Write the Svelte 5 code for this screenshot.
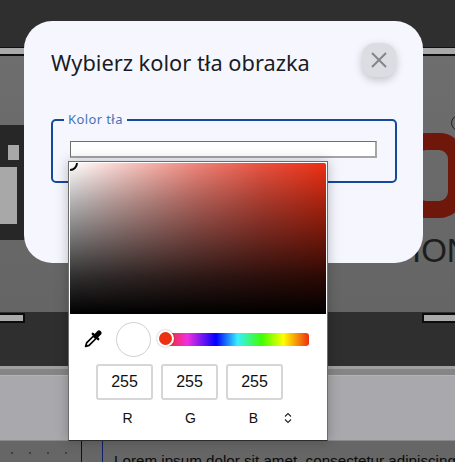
<script>
  const channels = [
    { label: 'R', value: 255 },
    { label: 'G', value: 255 },
    { label: 'B', value: 255 }
  ];
</script>

<div class="page">
  <div class="topbar"></div>
  <div class="banner">
    <div class="rail"></div>
    <div class="logo-i"><span class="dot"></span><span class="stem"></span></div>
    <div class="logo-o"></div>
    <div class="logo-mark"></div>
    <div class="logo-text">ION</div>
  </div>
  <div class="dark-band">
    <span class="handle left"></span>
    <span class="handle right"></span>
  </div>
  <div class="toolbar"></div>
  <div class="ruler-panel"></div>
  <div class="doc">
    <div class="ticks">
      <span></span><span></span><span></span><span></span>
    </div>
    <div class="line black"></div>
    <div class="line blue"></div>
    <p>Lorem ipsum dolor sit amet, consectetur adipiscing</p>
  </div>

  <div class="modal">
    <header>
      <h2>Wybierz kolor tła obrazka</h2>
      <button class="close" aria-label="Zamknij">
        <svg width="16" height="16" viewBox="0 0 16 16">
          <path d="M1 1 15 15M15 1 1 15" stroke="#84858b" stroke-width="2" fill="none" />
        </svg>
      </button>
    </header>
    <fieldset>
      <legend>Kolor tła</legend>
      <div class="color-input"></div>
    </fieldset>
  </div>

  <div class="picker">
    <div class="saturation"><span class="cursor"></span></div>
    <div class="controls">
      <svg class="dropper" width="18" height="18" viewBox="0 0 18 18">
        <path d="M10 5.5 2.6 12.9 1.6 16.4 5.1 15.4 12.5 8Z" fill="#fff" stroke="#000" stroke-width="1.7" stroke-linejoin="round" />
        <path d="M8.8 3.8 14.2 9.2" stroke="#000" stroke-width="2.4" stroke-linecap="round" />
        <path d="M11.8 6.2 15 3" stroke="#000" stroke-width="5" stroke-linecap="round" />
      </svg>
      <div class="swatch"></div>
      <div class="hue"><span class="hue-thumb"></span></div>
    </div>
    <div class="fields">
      <div class="inputs">
        {#each channels as c}
          <div class="value">{c.value}</div>
        {/each}
      </div>
      <div class="labels">
        {#each channels as c}
          <div class="label">{c.label}</div>
        {/each}
        <svg class="toggle" width="8" height="12" viewBox="0 0 8 12">
          <path d="M1 4.5 4 1.5 7 4.5M1 7.5 4 10.5 7 7.5" stroke="#222" stroke-width="1.1" fill="none" />
        </svg>
      </div>
    </div>
  </div>
</div>

<style>
  :global(body) {
    margin: 0;
    background: #666;
  }

  .page {
    position: relative;
    width: 455px;
    height: 462px;
    overflow: hidden;
    display: flex;
    flex-direction: column;
    font-family: 'Liberation Sans', Arial, sans-serif;
  }

  .topbar {
    height: 47px;
    flex: none;
    background: #2f2f2f;
  }

  .banner {
    position: relative;
    height: 264px;
    flex: none;
    background: linear-gradient(#6e6e6e, #656565);
    border-top: 1px solid #111;
    overflow: hidden;
  }

  .rail {
    height: 6px;
    background: #a9a9a9;
    border-bottom: 2px solid #0c0c0c;
  }

  .logo-i {
    position: absolute;
    left: 0;
    top: 77px;
    width: 26px;
    height: 115px;
    background: #272727;
  }

  .logo-i .dot {
    position: absolute;
    left: 8px;
    top: 20px;
    width: 11px;
    height: 15px;
    background: #a8a8a8;
  }

  .logo-i .stem {
    position: absolute;
    left: 0;
    top: 42px;
    width: 17px;
    height: 57px;
    background: #a8a8a8;
  }

  .logo-o {
    position: absolute;
    left: 400px;
    top: 85px;
    width: 65px;
    height: 85px;
    border: 17px solid #6f170b;
    border-radius: 26px;
    box-sizing: border-box;
  }

  .logo-mark {
    position: absolute;
    left: 451px;
    top: 67px;
    width: 14px;
    height: 14px;
    border: 1.5px solid #222;
    border-radius: 50%;
  }

  .logo-text {
    position: absolute;
    left: 412px;
    top: 185px;
    font-size: 33px;
    line-height: 36px;
    color: #1d1d1d;
  }

  .dark-band {
    position: relative;
    height: 54px;
    flex: none;
    background: #2f2f2f;
  }

  .handle {
    position: absolute;
    top: 1px;
    height: 6px;
    background: #aaa;
    border: 2px solid #0c0c0c;
  }

  .handle.left {
    left: -2px;
    width: 23px;
  }

  .handle.right {
    left: 422px;
    width: 40px;
  }

  .toolbar {
    height: 9px;
    flex: none;
    background: #858585;
    border-top: 3px solid #a0a0a0;
    box-sizing: border-box;
  }

  .ruler-panel {
    flex: none;
    height: 65px;
    background: #a9a9ad;
    border-top: 1px solid #b4b4b6;
    box-sizing: border-box;
  }

  .doc {
    position: relative;
    flex: 1;
    background: #666;
    border-top: 1px solid #8a8a8a;
    overflow: hidden;
  }

  .ticks {
    display: flex;
    gap: 16px;
    padding: 11px 0 0 11px;
  }

  .ticks span {
    width: 2px;
    height: 2px;
    background: #3f3f3f;
  }

  .line {
    position: absolute;
    top: 0;
    bottom: 0;
    width: 1px;
  }

  .line.black {
    left: 81px;
    background: #111;
  }

  .line.blue {
    left: 102px;
    background: #10206a;
  }

  .doc p {
    position: absolute;
    left: 114px;
    top: 11px;
    margin: 0;
    font-size: 15.2px;
    line-height: 18px;
    white-space: nowrap;
    color: #0b0b0b;
  }

  .modal {
    position: absolute;
    left: 24px;
    top: 21px;
    width: 399px;
    height: 242px;
    box-sizing: border-box;
    padding: 26px 27px;
    background: #f6f7fe;
    border-radius: 28px;
  }

  header {
    display: flex;
    justify-content: space-between;
    align-items: flex-start;
  }

  h2 {
    margin: 0;
    font-family: 'Noto Sans', sans-serif;
    font-size: 21.8px;
    line-height: 32px;
    font-weight: 400;
    color: #1a1c24;
  }

  .close {
    display: flex;
    align-items: center;
    justify-content: center;
    width: 34px;
    height: 34px;
    margin: -4px 0 0 0;
    padding: 0;
    border: none;
    border-radius: 13px;
    background: #dcdde3;
    box-shadow: 0 3px 8px rgba(0, 0, 0, 0.22);
  }

  fieldset {
    margin: 34px 0 0;
    padding: 15px 18px 0 17px;
    height: 70px;
    width: 345px;
    box-sizing: border-box;
    border: 2px solid #134a9a;
    border-radius: 5px;
  }

  legend {
    margin-left: -6px;
    padding: 0 4px;
    font-family: 'Noto Sans', sans-serif;
    font-size: 13px;
    line-height: 13px;
    color: #4a72b5;
    letter-spacing: 0.4px;
  }

  .color-input {
    height: 17px;
    width: 307px;
    box-sizing: border-box;
    background: #fff;
    border: 1px solid #6f6f6f;
    border-bottom: 2px solid #a5a5a5;
    border-right: 2px solid #a5a5a5;
  }

  .picker {
    position: absolute;
    left: 68px;
    top: 161px;
    width: 260px;
    height: 280px;
    box-sizing: border-box;
    padding: 1px;
    background: #fff;
    border: 1px solid #6c6c6c;
    border-bottom-color: #2c2c2c;
    box-shadow: 0 0 12px rgba(0, 0, 0, 0.25);
  }

  .saturation {
    position: relative;
    width: 256px;
    height: 151px;
    overflow: hidden;
    background:
      linear-gradient(
        to bottom,
        rgba(0, 0, 0, 0) 0%,
        rgba(0, 0, 0, 0.29) 25%,
        rgba(0, 0, 0, 0.55) 50%,
        rgba(0, 0, 0, 0.81) 75%,
        #000 100%
      ),
      linear-gradient(to right, #fff 0%, #f6c0ba 25%, #ef8378 50%, #ea5240 75%, #ee2f12 100%);
    border-radius: 2px 2px 0 0;
  }

  .cursor {
    position: absolute;
    left: -8px;
    top: -8px;
    width: 12px;
    height: 12px;
    border: 2px solid #0a0a0a;
    border-radius: 50%;
  }

  .controls {
    display: flex;
    align-items: center;
    height: 50px;
    padding-left: 14px;
  }

  .dropper {
    flex: none;
  }

  .swatch {
    flex: none;
    width: 33px;
    height: 33px;
    margin-left: 14px;
    background: #fff;
    border: 1px solid #cfcfcf;
    border-radius: 50%;
  }

  .hue {
    position: relative;
    flex: none;
    width: 143px;
    height: 13px;
    margin-left: 15px;
    border-radius: 3px;
    background: linear-gradient(
      to right,
      #ee2f12 0%,
      #f02fe0 15%,
      #0000ff 35%,
      #35f0ff 50%,
      #40ff00 67%,
      #ffff00 82%,
      #ee2f12 100%
    );
  }

  .hue-thumb {
    position: absolute;
    left: -9px;
    top: -2.5px;
    width: 13px;
    height: 13px;
    background: #ee2f12;
    border: 2.5px solid #fff;
    border-radius: 50%;
    box-shadow: 0 0 2px rgba(0, 0, 0, 0.35);
  }

  .fields {
    padding-left: 26px;
  }

  .inputs {
    display: flex;
    gap: 8px;
  }

  .value {
    width: 57px;
    height: 36px;
    box-sizing: border-box;
    border: 2px solid #d6d6d6;
    border-radius: 3px;
    text-align: center;
    font-size: 16px;
    line-height: 32px;
    color: #111;
  }

  .labels {
    display: flex;
    align-items: center;
    margin-top: 9px;
  }

  .label {
    width: 63px;
    text-align: center;
    font-size: 14px;
    line-height: 18px;
    color: #111;
  }

  .toggle {
    flex: none;
    margin-left: -1px;
  }
</style>
